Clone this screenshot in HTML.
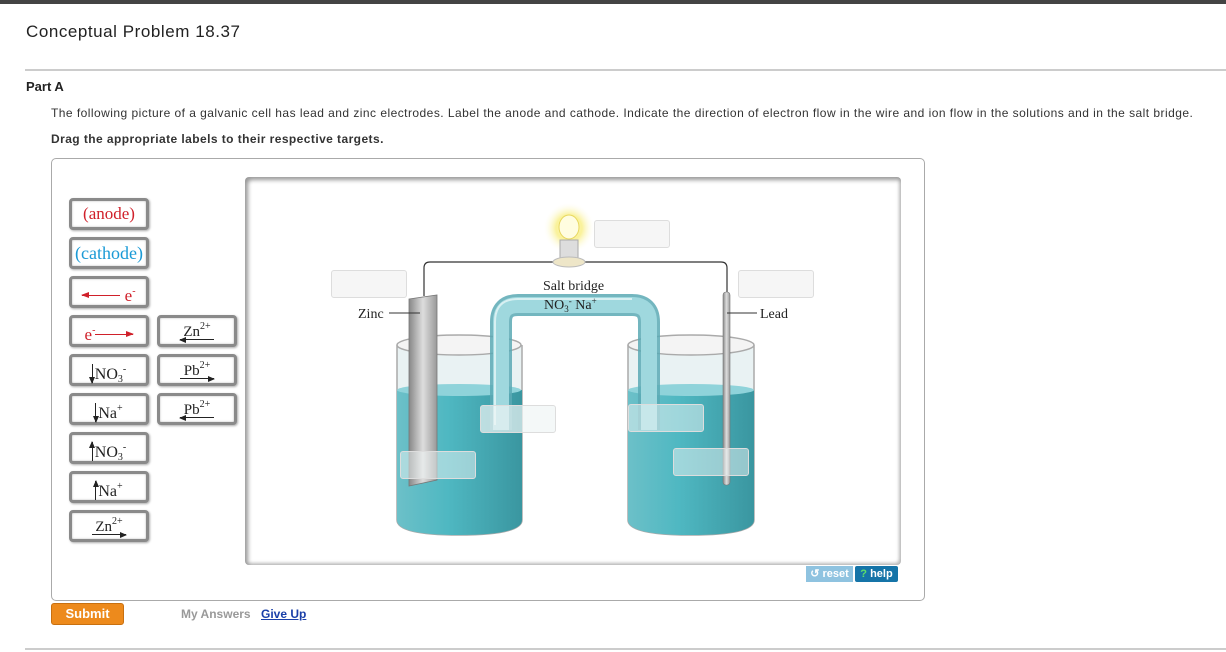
<!DOCTYPE html>
<html><head><meta charset="utf-8"><style>
*{margin:0;padding:0;box-sizing:border-box}
body{width:1226px;height:652px;background:#fff;position:relative;overflow:hidden;font-family:"Liberation Sans",Arial,sans-serif}
.a{position:absolute}
.lb{position:absolute;width:80px;height:32px;border:3px solid #8a8a8a;border-radius:4px;background:#fff;box-shadow:inset 0 0 2px #bbb,1px 1px 2px #aaa;font-family:"Liberation Serif",serif;font-size:17px;color:#222;text-align:center;line-height:26px}
sup{font-size:10px;vertical-align:7px}
sub{font-size:10px;vertical-align:-3px}
.tg{position:absolute;width:76px;height:28px;border-radius:3px;background:rgba(245,245,245,.85);border:1px solid #ddd}
.ar{position:absolute;left:50%;margin-left:-17px;top:21px;width:34px;height:1px;background:#222}
.ar.r:after{content:"";position:absolute;right:-1px;top:-2.5px;border-left:7px solid #222;border-top:3px solid transparent;border-bottom:3px solid transparent}
.ar.l:after{content:"";position:absolute;left:-1px;top:-2.5px;border-right:7px solid #222;border-top:3px solid transparent;border-bottom:3px solid transparent}
.ion{font-size:15px;line-height:17px;text-align:center}
.v{display:inline-block;width:1px;height:19px;background:#222;position:relative;vertical-align:-4px;margin-right:2px}
.v.d:after{content:"";position:absolute;left:-2.5px;bottom:-1px;border-top:7px solid #222;border-left:3px solid transparent;border-right:3px solid transparent}
.v.u:after{content:"";position:absolute;left:-2.5px;top:-1px;border-bottom:7px solid #222;border-left:3px solid transparent;border-right:3px solid transparent}
</style></head><body>
<div class="a" style="left:0;top:0;width:1226px;height:4px;background:#444"></div>
<div class="a" style="left:26px;top:22px;font-size:17px;color:#222;letter-spacing:.55px">Conceptual Problem 18.37</div>
<div class="a" style="left:25px;top:69px;width:1201px;height:2px;background:#ccc"></div>
<div class="a" style="left:26px;top:79px;font-size:13px;font-weight:bold;color:#222">Part A</div>
<div class="a" style="left:51px;top:106px;font-size:12px;color:#333;letter-spacing:.46px;white-space:nowrap">The following picture of a galvanic cell has lead and zinc electrodes. Label the anode and cathode. Indicate the direction of electron flow in the wire and ion flow in the solutions and in the salt bridge.</div>
<div class="a" style="left:51px;top:132px;font-size:12px;font-weight:bold;color:#333;letter-spacing:.43px">Drag the appropriate labels to their respective targets.</div>
<div class="a" style="left:51px;top:158px;width:874px;height:443px;border:1px solid #aaa;border-radius:5px"></div>

<div class="lb" style="left:69px;top:198px;color:#d0202a">(anode)</div>
<div class="lb" style="left:69px;top:237px;color:#1a9ad6;font-size:18px">(cathode)</div>
<div class="lb" style="left:69px;top:276px;color:#d0202a"><span style="display:inline-block;width:38px;height:1px;background:#d0202a;vertical-align:5px;position:relative"><span style="position:absolute;left:-1px;top:-3px;border-right:8px solid #d0202a;border-top:3.5px solid transparent;border-bottom:3.5px solid transparent"></span></span> e<sup>-</sup></div>
<div class="lb" style="left:69px;top:315px;color:#d0202a">e<sup>-</sup><span style="display:inline-block;width:38px;height:1px;background:#d0202a;vertical-align:5px;position:relative"><span style="position:absolute;right:-1px;top:-3px;border-left:8px solid #d0202a;border-top:3.5px solid transparent;border-bottom:3.5px solid transparent"></span></span></div>
<div class="lb" style="left:69px;top:354px;font-size:16px"><span class="v d"></span>NO<sub>3</sub><sup>-</sup></div>
<div class="lb" style="left:69px;top:393px;font-size:16px"><span class="v d"></span>Na<sup>+</sup></div>
<div class="lb" style="left:69px;top:432px;font-size:16px"><span class="v u"></span>NO<sub>3</sub><sup>-</sup></div>
<div class="lb" style="left:69px;top:471px;font-size:16px"><span class="v u"></span>Na<sup>+</sup></div>
<div class="lb ion" style="left:69px;top:510px">Zn<sup>2+</sup><div class="ar r"></div></div>
<div class="lb ion" style="left:157px;top:315px">Zn<sup>2+</sup><div class="ar l"></div></div>
<div class="lb ion" style="left:157px;top:354px">Pb<sup>2+</sup><div class="ar r"></div></div>
<div class="lb ion" style="left:157px;top:393px">Pb<sup>2+</sup><div class="ar l"></div></div>

<div class="a" style="left:245px;top:177px;width:656px;height:388px;border-radius:4px;background:#fff;box-shadow:inset 3px 3px 4px #999,inset -2px -2px 3px #bbb"></div>
<svg class="a" style="left:0;top:0" width="1226" height="652">
<defs>
<linearGradient id="w" x1="0" x2="1"><stop offset="0" stop-color="#6cc0c8"/><stop offset=".4" stop-color="#4fb8c2"/><stop offset="1" stop-color="#3a96a0"/></linearGradient>
<linearGradient id="m" x1="0" x2="1"><stop offset="0" stop-color="#888"/><stop offset=".5" stop-color="#ddd"/><stop offset="1" stop-color="#999"/></linearGradient>
<radialGradient id="g"><stop offset="0" stop-color="#fffbd0"/><stop offset=".5" stop-color="#f8ee80" stop-opacity=".8"/><stop offset="1" stop-color="#fff" stop-opacity="0"/></radialGradient>
</defs>
<path d="M424 296 V268 q0-6 6-6 H721 q6 0 6 6 V292" fill="none" stroke="#333" stroke-width="1.2"/>
<circle cx="569" cy="228" r="26" fill="url(#g)"/>
<ellipse cx="569" cy="227" rx="10" ry="12" fill="#fffde0" stroke="#e8d860"/>
<rect x="560" y="240" width="18" height="18" fill="#ddd" stroke="#aaa"/>
<ellipse cx="569" cy="262" rx="16" ry="5" fill="#eee6c8" stroke="#bbb"/>
<g>
<path d="M397 345 V520 q0 15 62 15 q63 0 63 -15 V345" fill="#e9f2f3" stroke="#aaa" stroke-width="1.5"/>
<path d="M397 390 V520 q0 15 62 15 q63 0 63 -15 V390 q-62 10 -125 0z" fill="url(#w)"/>
<ellipse cx="459" cy="390" rx="62" ry="6" fill="#8fd3da"/>
<ellipse cx="459" cy="345" rx="62" ry="10" fill="#f4f4f4" stroke="#aaa" stroke-width="1.5"/>
<path d="M628 345 V520 q0 15 63 15 q63 0 63 -15 V345" fill="#e9f2f3" stroke="#aaa" stroke-width="1.5"/>
<path d="M628 390 V520 q0 15 63 15 q63 0 63 -15 V390 q-63 10 -126 0z" fill="url(#w)"/>
<ellipse cx="691" cy="390" rx="63" ry="6" fill="#8fd3da"/>
<ellipse cx="691" cy="345" rx="63" ry="10" fill="#f4f4f4" stroke="#aaa" stroke-width="1.5"/>
</g>
<path d="M409 299 L437 295 V480 L409 486z" fill="url(#m)" stroke="#777" stroke-width=".8"/>
<rect x="723" y="292" width="7" height="193" rx="3" fill="url(#m)" stroke="#777" stroke-width=".6"/>
<path d="M501 430 V322 q0-17 17-17 H632 q17 0 17 17 V430" fill="none" stroke="#5aa9b4" stroke-width="22" opacity=".85"/>
<path d="M501 430 V322 q0-17 17-17 H632 q17 0 17 17 V430" fill="none" stroke="#9fd8de" stroke-width="16"/>
<path d="M495 425 V322 q0-23 23-23 H632" fill="none" stroke="#d8f0f2" stroke-width="2"/>
<g font-family="Liberation Serif,serif" font-size="14" fill="#222">
<text x="543" y="290">Salt bridge</text>
<text x="544" y="309" font-size="14">NO<tspan font-size="9" dy="3">3</tspan><tspan font-size="9" dy="-8">-</tspan><tspan dy="5"> Na</tspan><tspan font-size="9" dy="-5">+</tspan></text>
<text x="358" y="318">Zinc</text>
<text x="760" y="318">Lead</text>
</g>
<line x1="389" y1="313" x2="420" y2="313" stroke="#333"/>
<line x1="727" y1="313" x2="757" y2="313" stroke="#333"/>
</svg>
<div class="tg" style="left:594px;top:220px"></div>
<div class="tg" style="left:331px;top:270px"></div>
<div class="tg" style="left:738px;top:270px"></div>
<div class="tg" style="left:480px;top:405px;background:rgba(240,245,245,.7)"></div>
<div class="tg" style="left:628px;top:404px;background:rgba(240,245,245,.5)"></div>
<div class="tg" style="left:400px;top:451px;background:rgba(240,245,245,.5)"></div>
<div class="tg" style="left:673px;top:448px;background:rgba(240,245,245,.5)"></div>

<div class="a" style="left:806px;top:566px;width:47px;height:16px;background:#8fc3e0;color:#fff;font-size:11px;font-weight:bold;line-height:16px;text-align:center">&#8634; reset</div>
<div class="a" style="left:855px;top:566px;width:43px;height:16px;background:#1574a8;color:#fff;font-size:11px;font-weight:bold;line-height:16px;text-align:center;border-radius:2px"><span style="color:#5fe06a">?</span> help</div>

<div class="a" style="left:51px;top:603px;width:73px;height:22px;background:#ed8a1c;border:1px solid #c87010;border-radius:3px;color:#fff;font-size:13px;font-weight:bold;text-align:center;line-height:20px">Submit</div>
<div class="a" style="left:181px;top:607px;font-size:12px;font-weight:bold;color:#999">My Answers</div>
<div class="a" style="left:261px;top:607px;font-size:12px;font-weight:bold;color:#1a3fa8;text-decoration:underline">Give Up</div>
<div class="a" style="left:25px;top:648px;width:1201px;height:2px;background:#ccc"></div>
</body></html>
